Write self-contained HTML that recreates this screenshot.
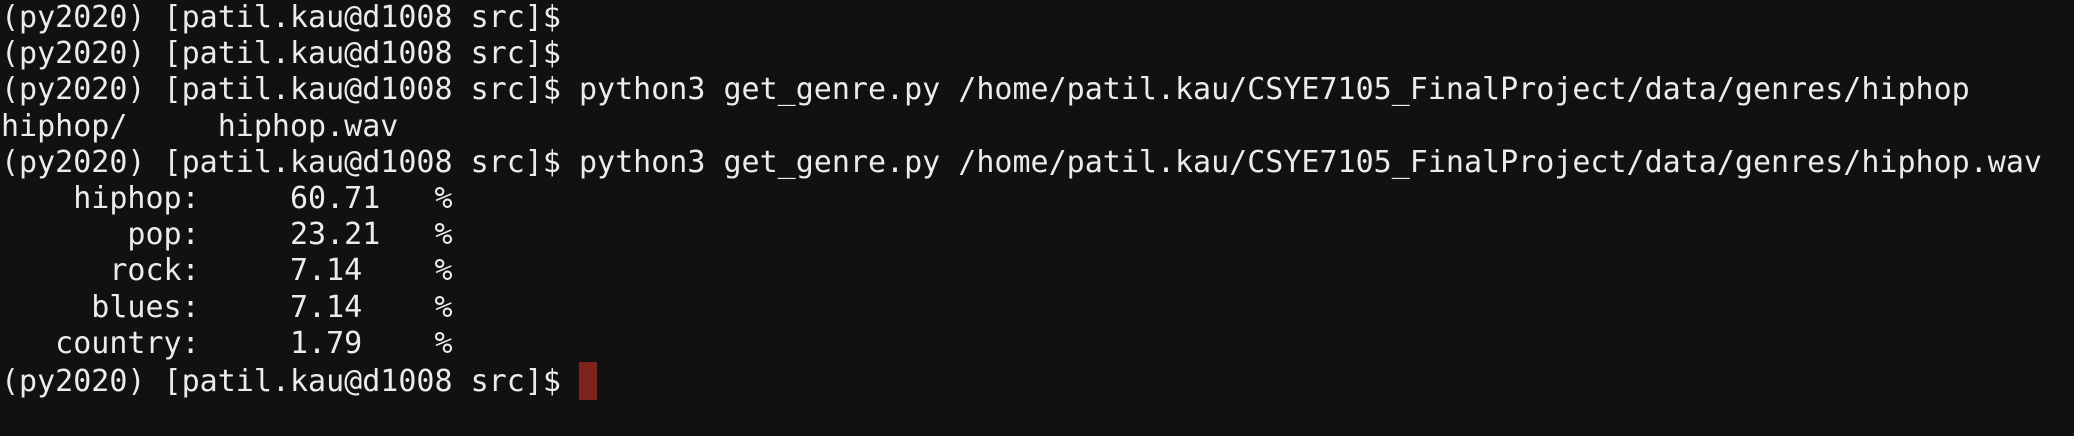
<!DOCTYPE html>
<html><head><meta charset="utf-8"><style>
html,body{margin:0;padding:0;background:#111111;width:2074px;height:436px;overflow:hidden}
pre{margin:0;padding:0 0 0 1px;font-family:"DejaVu Sans Mono","Liberation Mono",monospace;font-size:30px;line-height:36.2px;color:#ececec;white-space:pre}
.c{display:inline-block;width:18px;height:38px;background:#7f221b;vertical-align:-9px}
</style></head><body><pre>(py2020) [patil.kau@d1008 src]$
(py2020) [patil.kau@d1008 src]$
(py2020) [patil.kau@d1008 src]$ python3 get_genre.py /home/patil.kau/CSYE7105_FinalProject/data/genres/hiphop
hiphop/     hiphop.wav
(py2020) [patil.kau@d1008 src]$ python3 get_genre.py /home/patil.kau/CSYE7105_FinalProject/data/genres/hiphop.wav
    hiphop:     60.71   %
       pop:     23.21   %
      rock:     7.14    %
     blues:     7.14    %
   country:     1.79    %
(py2020) [patil.kau@d1008 src]$ <span class="c"></span></pre></body></html>
